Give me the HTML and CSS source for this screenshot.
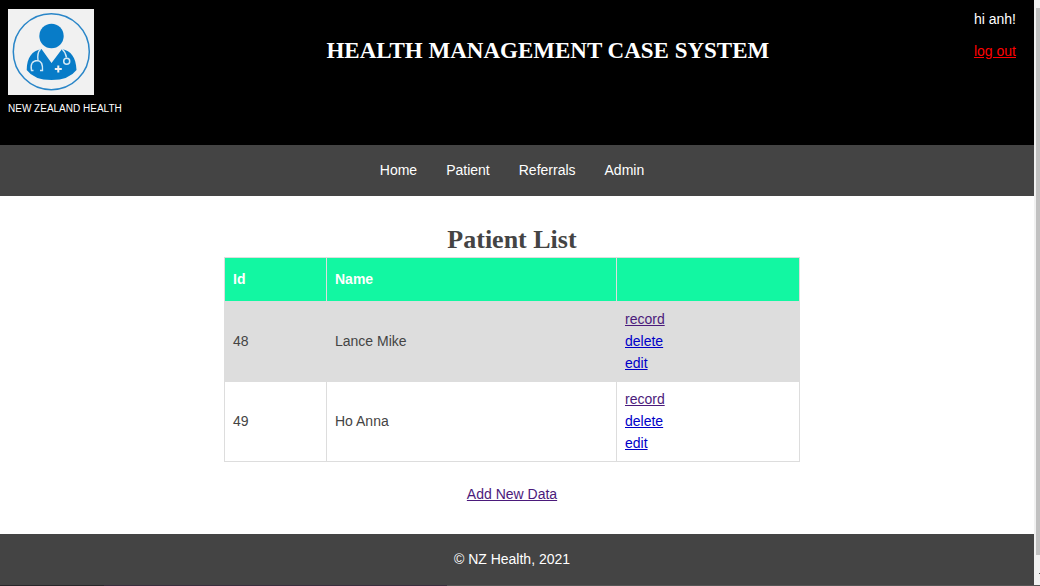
FILE: index.html
```html
<!DOCTYPE html>
<html lang="en">
<head>
<meta charset="utf-8">
<meta name="viewport" content="width=device-width, initial-scale=1">
<title>Health Management Case System</title>
<link rel="stylesheet" href="styles.css">
</head>
<body>
<div class="page">
  <header class="header">
    <div class="brand">
      <svg class="logo" viewBox="0 0 86 86" aria-hidden="true">
        <rect width="86" height="86" fill="#f1f1f1"/>
        <circle cx="43.3" cy="42.7" r="38" fill="none" stroke="#2a86c8" stroke-width="1.5"/>
        <circle cx="43.5" cy="27" r="12.2" fill="#087cc8"/>
        <path d="M33.500 40C24 42 19 48 18.700 61Q26 71 43.500 71Q61 71 68.500 61C68 48 63 42 54 40L43.500 54Z" fill="#087cc8"/>
        <path d="M32.500 40Q29 44 30 51M25.500 61.500H23.500Q21.500 52 29.500 51.500Q35 52 34.500 61.500H32" fill="none" stroke="#d4e9f5" stroke-width="1.4"/>
        <path d="M54 40Q57.500 43 58.500 48.500" fill="none" stroke="#d4e9f5" stroke-width="1.4"/>
        <circle cx="58.700" cy="52.300" r="3" fill="#087cc8" stroke="#d4e9f5" stroke-width="1.5"/>
        <path d="M50.300 56.500V63.500M46.800 60H53.800" stroke="#f1f1f1" stroke-width="2"/>
      </svg>
      <p class="brand-name">NEW ZEALAND HEALTH</p>
    </div>
    <h1 class="title">HEALTH MANAGEMENT CASE SYSTEM</h1>
    <div class="user">
      <span>hi anh!</span>
      <a class="logout" href="#logout">log out</a>
    </div>
  </header>
  <nav class="nav">
    <a class="nav-link" href="#home">Home</a>
    <a class="nav-link" href="#patient">Patient</a>
    <a class="nav-link" href="#referrals">Referrals</a>
    <a class="nav-link" href="#admin">Admin</a>
  </nav>
  <main class="main">
    <h2 class="heading">Patient List</h2>
    <table class="patients">
      <colgroup><col class="col-id"><col class="col-name"><col></colgroup>
      <thead>
        <tr><th scope="col">Id</th><th scope="col">Name</th><th></th></tr>
      </thead>
      <tbody>
        <tr class="shaded">
          <td>48</td><td>Lance Mike</td>
          <td><a class="visited" href="#record-48">record</a><br><a class="link" href="#delete-48">delete</a><br><a class="link" href="#edit-48">edit</a></td>
        </tr>
        <tr>
          <td>49</td><td>Ho Anna</td>
          <td><a class="visited" href="#record-49">record</a><br><a class="link" href="#delete-49">delete</a><br><a class="link" href="#edit-49">edit</a></td>
        </tr>
      </tbody>
    </table>
    <a class="visited" href="#add">Add New Data</a>
  </main>
  <footer class="footer">© NZ Health, 2021</footer>
</div>
<div class="scroll-track" aria-hidden="true">
  <div class="scroll-thumb"></div>
  <svg class="scroll-arrow" viewBox="0 0 4 4"><path d="M3 1H4V2H3Z" fill="#505050"/></svg>
</div>
<div class="edge" aria-hidden="true"></div>
</body>
</html>
```
FILE: styles.css
```css
* { box-sizing: border-box; }

body {
  margin: 0;
  min-height: 100vh;
  display: grid;
  grid-template-columns: minmax(0, 1fr) 6px;
  grid-template-rows: 1fr 1px;
  background: #fff;
  color: #444;
  font-family: "Liberation Sans", Arial, sans-serif;
  font-size: 14px;
  line-height: 22px;
}

.page {
  display: flex;
  flex-direction: column;
}

.header {
  display: flex;
  justify-content: space-between;
  padding: 8px 18px 26px 8px;
  background: #000;
  color: #fff;
}

.logo {
  display: block;
  width: 86px;
  height: 86px;
  margin-top: 1px;
}

.brand-name {
  margin: 4px 0 0;
  font-size: 10px;
  line-height: 20px;
}

.title,
.heading {
  margin: 0;
  font-family: Georgia, "Liberation Serif", serif;
  font-weight: bold;
}

.title {
  padding-top: 27px;
  font-size: 23px;
  line-height: 32px;
}

.user {
  display: flex;
  flex-direction: column;
  gap: 10px;
}

.logout { color: #f00; }

.nav {
  display: flex;
  justify-content: center;
  gap: 29px;
  padding: 14px 10px 15px 0;
  background: #444;
}

.nav-link {
  color: #fff;
  text-decoration: none;
}

.main {
  flex: 1;
  display: flex;
  flex-direction: column;
  align-items: center;
  padding: 28px 10px 28px 0;
}

.heading {
  font-size: 26px;
  line-height: 32px;
}

.patients {
  width: 100%;
  max-width: 576px;
  margin: 1px 0 21px;
  border-collapse: collapse;
  table-layout: fixed;
}

.col-id { width: 102px; }
.col-name { width: 290px; }

.patients th,
.patients td {
  padding: 6px 8px 7px;
  border: 1px solid #ddd;
  text-align: left;
}

.patients th {
  padding: 10px 8px 11px;
  background: #12f7a2;
  color: #fff;
}

.shaded { background: #ddd; }

.link { color: #0000c8; }
.visited { color: #4b1a7b; }

.footer {
  padding: 14px 10px 15px 0;
  background: #444;
  color: #fff;
  text-align: center;
}

.scroll-track {
  display: flex;
  flex-direction: column;
  padding: 8px 0 9px 2px;
  background: #f1f1f1;
}

.scroll-thumb {
  flex: 1;
  background: #c1c1c1;
}

.scroll-arrow {
  width: 4px;
  height: 4px;
  margin-top: 17px;
}

.edge {
  grid-column: 1 / -1;
  background: linear-gradient(to right, #28262a 10%, #3a2e3e 10% 43%, #555 43%);
}
```
